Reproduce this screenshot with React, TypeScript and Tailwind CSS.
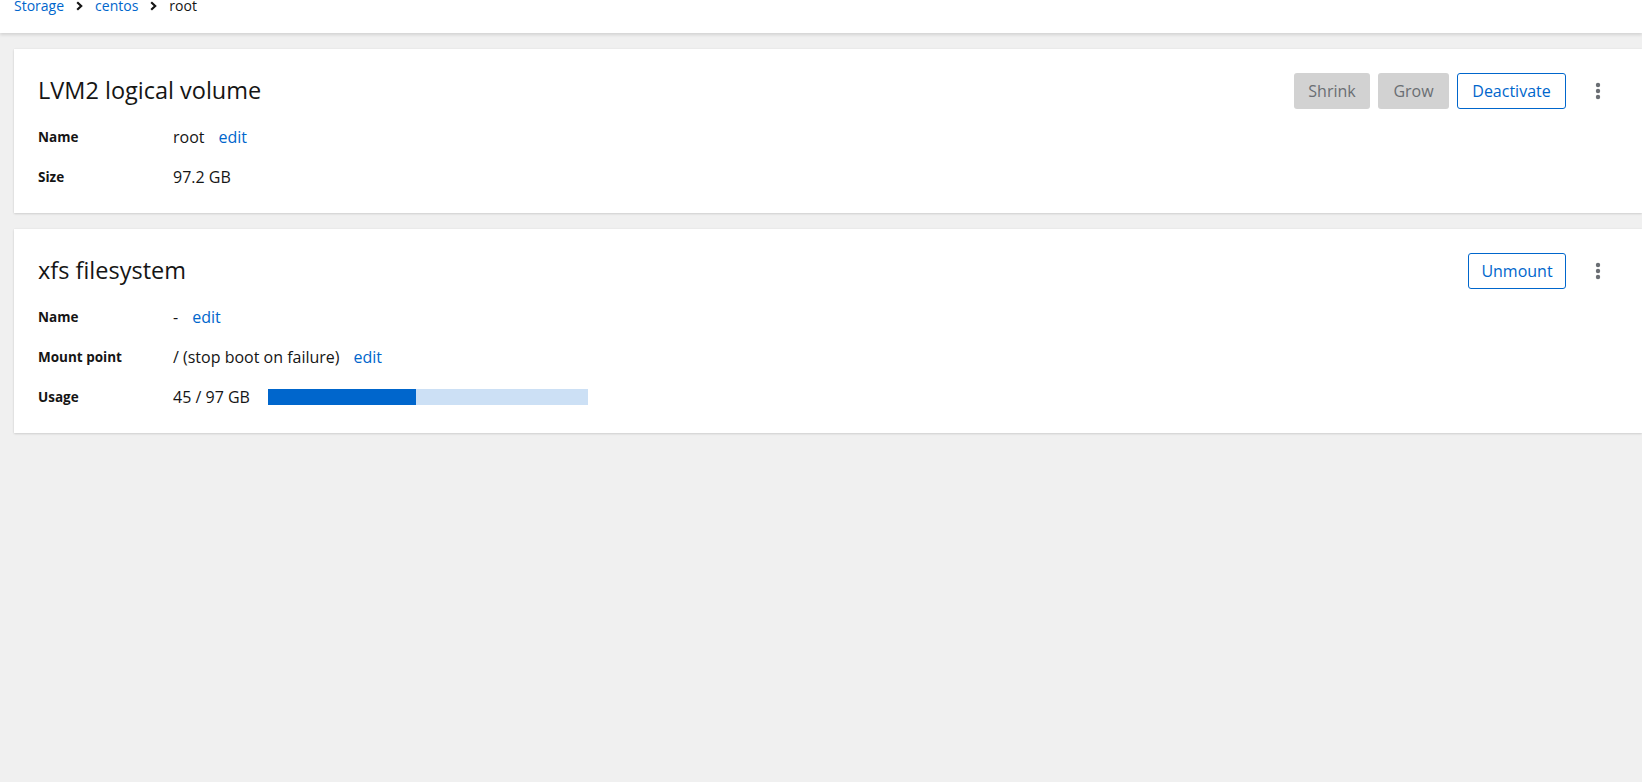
import React from "react";

const font = { fontFamily: '"Open Sans", "Noto Sans", sans-serif' };

function Chevron() {
  return (
    <svg width="7" height="10" viewBox="0 0 7 10" className="mx-[12px] shrink-0">
      <path d="M1.2 1.2 L5.2 5 L1.2 8.8" fill="none" stroke="#151515" strokeWidth="2.2" />
    </svg>
  );
}

function Kebab() {
  return (
    <button className="ml-1 flex h-9 w-10 items-center justify-center">
      <svg width="6" height="18" viewBox="0 0 6 18">
        <circle cx="3" cy="3" r="2.2" fill="#6a6e73" />
        <circle cx="3" cy="9" r="2.2" fill="#6a6e73" />
        <circle cx="3" cy="15" r="2.2" fill="#6a6e73" />
      </svg>
    </button>
  );
}

function Row({ label, children }: { label: string; children: React.ReactNode }) {
  return (
    <div className="flex h-6 items-center">
      <div className="w-[135px] shrink-0 text-[13.5px] font-bold text-[#151515]">{label}</div>
      <div className="flex items-center text-[16px] text-[#151515]">{children}</div>
    </div>
  );
}

function Edit() {
  return <span className="ml-[14px] text-[16px] text-[#0066cc]">edit</span>;
}

export default function App() {
  return (
    <div className="min-h-[782px] w-full overflow-hidden bg-[#f0f0f0]" style={font}>
      <div className="relative z-10 h-[33px] overflow-hidden bg-white shadow-[0_2px_3px_rgba(3,3,3,0.12)]">
        <div className="-mt-[5px] flex items-center pl-[14px] text-[14px] leading-[21px]">
          <span className="text-[#0066cc]">Storage</span>
          <Chevron />
          <span className="text-[#0066cc]">centos</span>
          <Chevron />
          <span className="text-[#151515]">root</span>
        </div>
      </div>

      <div className="flex flex-col gap-4 pl-[14px] pt-4">
        <div className="bg-white p-6 shadow-[0_1px_2px_rgba(3,3,3,0.12),0_0_2px_rgba(3,3,3,0.06)]">
          <div className="flex h-9 items-center justify-between">
            <h2 className="text-[23.5px] text-[#151515]">LVM2 logical volume</h2>
            <div className="flex items-center gap-2">
              <button className="h-9 w-[76px] rounded-[3px] bg-[#d2d2d2] text-[16px] text-[#6a6e73]">Shrink</button>
              <button className="h-9 w-[71px] rounded-[3px] bg-[#d2d2d2] text-[16px] text-[#6a6e73]">Grow</button>
              <button className="h-9 w-[109px] rounded-[3px] border border-[#0066cc] bg-white text-[16px] text-[#0066cc]">Deactivate</button>
              <Kebab />
            </div>
          </div>
          <div className="mt-4 flex flex-col gap-4">
            <Row label="Name">
              <span>root</span>
              <Edit />
            </Row>
            <Row label="Size">
              <span>97.2 GB</span>
            </Row>
          </div>
        </div>

        <div className="bg-white p-6 shadow-[0_1px_2px_rgba(3,3,3,0.12),0_0_2px_rgba(3,3,3,0.06)]">
          <div className="flex h-9 items-center justify-between">
            <h2 className="text-[23.5px] text-[#151515]">xfs filesystem</h2>
            <div className="flex items-center gap-2">
              <button className="h-9 w-[98px] rounded-[3px] border border-[#0066cc] bg-white text-[16px] text-[#0066cc]">Unmount</button>
              <Kebab />
            </div>
          </div>
          <div className="mt-4 flex flex-col gap-4">
            <Row label="Name">
              <span>-</span>
              <Edit />
            </Row>
            <Row label="Mount point">
              <span>/ (stop boot on failure)</span>
              <Edit />
            </Row>
            <Row label="Usage">
              <span>45 / 97 GB</span>
              <div className="ml-[18px] flex h-4 w-[320px] bg-[#cce0f5]">
                <div className="h-4 bg-[#0066cc]" style={{ width: `${(45 / 97) * 100}%` }} />
              </div>
            </Row>
          </div>
        </div>
      </div>
    </div>
  );
}
